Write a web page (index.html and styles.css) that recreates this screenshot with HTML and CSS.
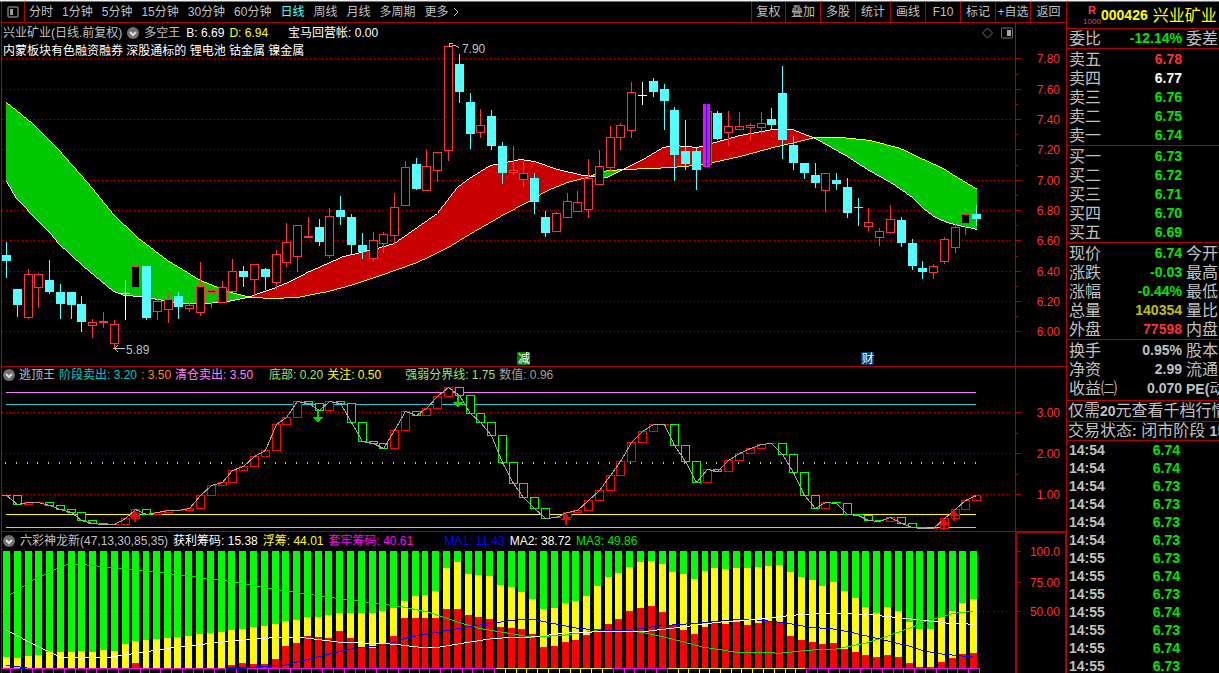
FILE: index.html
```html
<!DOCTYPE html>
<html lang="zh-CN">
<head>
<meta charset="utf-8">
<title>兴业矿业 000426</title>
<link rel="stylesheet" href="styles.css">
</head>
<body>
<div class="app">
  <main class="charts">
    <nav class="toolbar">
      <button class="tool layout" aria-label="布局"><svg width="12" height="12" viewBox="0 0 12 12"><rect x="1" y="1" width="10" height="10" rx="1" fill="none" stroke="#777" stroke-width="1.5"/><rect x="3" y="3" width="3" height="6" fill="#999"/></svg></button>
      <div class="periods">
        <button class="tool">分时</button><button class="tool">1分钟</button><button class="tool">5分钟</button><button class="tool">15分钟</button><button class="tool">30分钟</button><button class="tool">60分钟</button><button class="tool active">日线</button><button class="tool">周线</button><button class="tool">月线</button><button class="tool">多周期</button><button class="tool more">更多<svg width="6" height="10" viewBox="0 0 6 10"><path d="M1 1L5 5L1 9" fill="none" stroke="#c0c0c0"/></svg></button>
      </div>
      <div class="actions">
        <button class="tool">复权</button><button class="tool">叠加</button><button class="tool">多股</button><button class="tool">统计</button><button class="tool">画线</button><button class="tool">F10</button><button class="tool">标记</button><button class="tool">+自选</button><button class="tool">返回</button>
      </div>
    </nav>
    <section class="pane pane-main">
      <div class="plot">
        <div class="overlay">
          <div class="legend">
            <span>兴业矿业(日线.前复权)</span>
            <svg class="chevron" viewBox="0 0 12 12"><circle cx="6" cy="6" r="6"/><path d="M3 5L6 8L9 5"/></svg>
            <span>多空王</span><span class="white gap-s">B: 6.69</span><span class="yellow">D: 6.94</span><span class="white gap-l">宝马回营帐: 0.00</span>
            <svg class="view-icons" width="32" height="12" viewBox="0 0 32 12"><path d="M6.500 1L11.500 6L6.500 11L1.500 6Z" fill="none" stroke="#707070"/><rect x="20.500" y="1" width="11" height="10" rx="1" fill="none" stroke="#707070"/><rect x="26" y="3" width="4" height="6" fill="#a8a8a8"/></svg>
          </div>
          <div class="tags white">内蒙板块有色融资融券 深股通标的 锂电池 钴金属 镍金属</div>
        </div>
        <svg id="candles" class="draw" viewBox="0 23 1013 343" preserveAspectRatio="xMinYMin meet"></svg>
      </div>
      <svg id="axis1" class="axis" viewBox="0 23 51 343" preserveAspectRatio="xMinYMin meet"></svg>
    </section>
    <section class="pane pane-escape">
      <div class="plot">
        <div class="legend">
          <svg class="chevron" viewBox="0 0 12 12"><circle cx="6" cy="6" r="6"/><path d="M3 5L6 8L9 5"/></svg>
          <span>逃顶王</span><span class="teal">阶段卖出: 3.20</span><span class="orange">: 3.50</span><span class="pink">清仓卖出: 3.50</span><span class="lime gap-m">底部: 0.20</span><span class="yellow">关注: 0.50</span><span class="lime gap-w">强弱分界线: 1.75</span><span class="dim">数值: 0.96</span>
        </div>
        <svg id="escape" class="draw" viewBox="0 384 1013 147" preserveAspectRatio="xMinYMin meet"></svg>
      </div>
      <svg id="axis2" class="axis" viewBox="0 367 51 164" preserveAspectRatio="xMinYMin meet"></svg>
    </section>
    <section class="pane pane-chips">
      <div class="plot">
        <div class="legend">
          <svg class="chevron" viewBox="0 0 12 12"><circle cx="6" cy="6" r="6"/><path d="M3 5L6 8L9 5"/></svg>
          <span>六彩神龙新(47,13,30,85,35)</span><span class="white">获利筹码: 15.38</span><span class="yellow">浮筹: 44.01</span><span class="magenta">套牢筹码: 40.61</span><span class="blue gap-xl">MA1: 11.43</span><span class="white">MA2: 38.72</span><span class="green">MA3: 49.86</span>
        </div>
        <svg id="chips" class="draw" viewBox="0 549 1013 124" preserveAspectRatio="xMinYMin meet"></svg>
      </div>
      <svg id="axis3" class="axis" viewBox="0 532 51 141" preserveAspectRatio="xMinYMin meet"></svg>
    </section>
  </main>
  <aside class="quote">
    <header class="stock"><span class="badge"><b>R</b><small>1000</small></span><b class="code">000426</b><span class="name">兴业矿业</span></header>
    <table class="block ratio"><tbody><tr><th>委比</th><td class="green">-12.14%</td><td>委差</td></tr></tbody></table>
    <table class="block"><tbody>
      <tr><th>卖五</th><td class="red">6.78</td><td></td></tr>
      <tr><th>卖四</th><td class="white">6.77</td><td></td></tr>
      <tr><th>卖三</th><td class="green">6.76</td><td></td></tr>
      <tr><th>卖二</th><td class="green">6.75</td><td></td></tr>
      <tr><th>卖一</th><td class="green">6.74</td><td></td></tr>
    </tbody></table>
    <table class="block"><tbody>
      <tr><th>买一</th><td class="green">6.73</td><td></td></tr>
      <tr><th>买二</th><td class="green">6.72</td><td></td></tr>
      <tr><th>买三</th><td class="green">6.71</td><td></td></tr>
      <tr><th>买四</th><td class="green">6.70</td><td></td></tr>
      <tr><th>买五</th><td class="green">6.69</td><td></td></tr>
    </tbody></table>
    <table class="block"><tbody>
      <tr><th>现价</th><td class="green">6.74</td><td>今开</td></tr>
      <tr><th>涨跌</th><td class="green">-0.03</td><td>最高</td></tr>
      <tr><th>涨幅</th><td class="green">-0.44%</td><td>最低</td></tr>
      <tr><th>总量</th><td class="gold">140354</td><td>量比</td></tr>
      <tr><th>外盘</th><td class="red">77598</td><td>内盘</td></tr>
    </tbody></table>
    <table class="block funds"><tbody>
      <tr><th>换手</th><td>0.95%</td><td>股本</td></tr>
      <tr><th>净资</th><td>2.99</td><td>流通</td></tr>
      <tr><th>收益㈡</th><td>0.070</td><td><b>PE(</b>动)</td></tr>
    </tbody></table>
    <p class="notice">仅需<b>20</b>元查看千档行情</p>
    <p class="notice status">交易状态<b>:</b> 闭市阶段 <b>15:00</b></p>
    <table class="ticks"><tbody>
      <tr><th>14:54</th><td>6.74</td></tr>
      <tr><th>14:54</th><td>6.74</td></tr>
      <tr><th>14:54</th><td>6.73</td></tr>
      <tr><th>14:54</th><td>6.73</td></tr>
      <tr><th>14:54</th><td>6.73</td></tr>
      <tr><th>14:54</th><td>6.73</td></tr>
      <tr><th>14:55</th><td>6.73</td></tr>
      <tr><th>14:55</th><td>6.74</td></tr>
      <tr><th>14:55</th><td>6.73</td></tr>
      <tr><th>14:55</th><td>6.74</td></tr>
      <tr><th>14:55</th><td>6.73</td></tr>
      <tr><th>14:55</th><td>6.74</td></tr>
      <tr><th>14:55</th><td>6.73</td></tr>
    </tbody></table>
  </aside>
</div>
<script src="charts.js"></script>
</body>
</html>
```
FILE: styles.css
```css
* { box-sizing: border-box; }
body {
  margin: 0;
  background: #000;
  color: #c0c0c0;
  font: 12px/18px "Liberation Sans", "Noto Sans CJK SC", sans-serif;
  overflow: hidden;
}
.app {
  display: grid;
  grid-template-columns: minmax(0, 1fr) 153px;
  height: 100vh;
  border-top: 1px solid #f0f0f0;
  box-shadow: inset 0 1px #6f7a74;
  padding-top: 1px;
}
.charts {
  display: flex;
  flex-direction: column;
  min-width: 0;
  min-height: 0;
  border-left: 1px solid #b00000;
  margin-left: 1px;
}
.toolbar {
  display: flex;
  flex: 0 0 21px;
  border-bottom: 1px solid #b00000;
}
.tool {
  background: none;
  border: 0;
  padding: 0;
  color: #c0c0c0;
  font: inherit;
  line-height: 20px;
  white-space: nowrap;
}
.tool.active { color: #54ffff; }
.layout {
  width: 23px;
  border-right: 1px solid #b00000;
  display: flex;
  align-items: center;
  justify-content: center;
}
.periods { display: flex; gap: 9px; padding-left: 4px; }
.more { display: flex; align-items: center; gap: 4px; }
.actions {
  display: grid;
  grid-template-columns: 34px repeat(7, 35px) 36px;
  margin-left: auto;
}
.actions .tool { border-left: 1px solid #b00000; }

.pane { display: flex; min-height: 0; }
.pane-main { flex: 344 344 0; border-bottom: 1px solid #b00000; }
.pane-escape { flex: 165 165 0; border-bottom: 1px solid #b00000; }
.pane-chips { flex: 141 141 0; }
.plot {
  position: relative;
  display: flex;
  flex-direction: column;
  flex: 1;
  min-width: 0;
}
.draw { display: block; flex: 1; width: 100%; min-height: 0; }
.axis { flex: 0 0 51px; height: 100%; }
.overlay { position: absolute; inset: 0 0 auto; }
.legend {
  display: flex;
  align-items: center;
  gap: 5px;
  height: 17px;
  padding-left: 1px;
  white-space: nowrap;
}
.pane-escape .legend { gap: 4px; }
.overlay .legend { height: 19px; }
.tags { padding-left: 1px; }
.chevron { width: 12px; height: 12px; }
.chevron circle { fill: #707070; }
.chevron path { fill: none; stroke: #ddd; stroke-width: 2; }
.view-icons { margin-left: auto; margin-right: 2px; }
.gap-s { margin-left: 1px; }
.gap-m { margin-left: 12px; }
.gap-l { margin-left: 15px; }
.gap-w { margin-left: 20px; }
.gap-xl { margin-left: 26px; }

.white { color: #fff; }
.yellow { color: #ff0; }
.teal { color: #00c8c8; }
.orange { color: #ff8c1a; }
.pink { color: #ff80ff; }
.lime { color: #a0e070; }
.dim { color: #a0a0a0; }
.magenta { color: #f0f; }
.blue { color: #00f; }
.green { color: #00e600; }
.red { color: #ff3232; }
.gold { color: #c0c000; }

.quote {
  border-left: 1px solid #b00000;
  overflow: hidden;
  font-size: 16px;
  line-height: 19px;
  white-space: nowrap;
}
.quote b { font-size: 14px; }
.stock {
  display: flex;
  align-items: center;
  height: 27px;
  padding-left: 16px;
  border-bottom: 1px solid #b00000;
  color: #ff0;
}
.badge {
  display: flex;
  flex-direction: column;
  align-items: center;
  width: 18px;
  color: #ff3c3c;
}
.quote .badge b { font-size: 11px; line-height: 13px; }
.badge small { font: 8px/10px "Liberation Sans", sans-serif; }
.name { padding-left: 5px; }
.block {
  display: block;
  width: 100%;
  padding-top: 1px;
  border-bottom: 1px solid #b00000;
  border-spacing: 0;
  overflow: hidden;
}
.ratio { padding-top: 0; }
.funds { padding-bottom: 2px; }
.quote th, .quote td { height: 19px; padding: 0; line-height: 19px; }
.block tr { display: grid; grid-template-columns: 50px 65px 37px; }
.quote .block th { padding-left: 2px; font-weight: 400; text-align: left; }
.block td:nth-child(2) { font-size: 14px; font-weight: 700; text-align: right; }
.quote .block td:nth-child(3) { padding-left: 4px; }
.notice {
  height: 21px;
  margin: 0;
  padding-left: 1px;
  border-bottom: 1px solid #b00000;
  line-height: 19px;
}
.status { height: 19px; line-height: 17px; }
.ticks { border-spacing: 0; font-size: 14px; font-weight: 700; }
.quote .ticks th, .quote .ticks td { height: 18px; line-height: 18px; }
.quote .ticks th { width: 50px; padding-left: 2px; text-align: left; }
.ticks td { width: 63px; text-align: right; color: #00e600; }

svg text { font: 12px "Liberation Sans", "Noto Sans CJK SC", sans-serif; }
.crisp { shape-rendering: crispEdges; }
```
FILE: charts.js
```js
const OFFSET = 2; // the plots start two pixels in from the window edge
const cx = i => Math.round(6 + i * 10.78);
const rect = (x, y, w, h, fill) => `<rect x="${x}" y="${y}" width="${w}" height="${h}" fill="${fill}"/>`;
const box = (x, y, w, h, color, fill) => `<rect x="${x + 0.5}" y="${y + 0.5}" width="${w - 1}" height="${h - 1}" fill="${fill}" stroke="${color}"/>`;
const line = (pts, color) => `<polyline fill="none" stroke="${color}" points="${pts.map(p => `${p[0] + 0.5},${p[1] + 0.5}`).join(' ')}"/>`;
const dots = y => `<path d="M2 ${y + 0.5}H1014" stroke="#c00000" stroke-dasharray="1 3"/>`;
const pairs = s => s.split(' ').map(p => p.split(',').map(Number));
const put = (id, body) => { document.getElementById(id).innerHTML = `<g class="crisp" transform="translate(${-OFFSET} 0)">${body}</g>`; };

/* Candles: kind (c falling, r rising, w unchanged), high, body top, body bottom, low */
const candles = `c242,255,261,277 c289,289,305,316 r269,274,317,318 r273,274,287,307 c260,280,292,293 c284,292,304,318 c292,292,305,318 c296,304,322,331 r319,322,325,337 r312,321,322,327
r320,324,343,347 w280,293,294,319 r249,266,287,287 c266,266,318,319 r299,301,311,319 r294,299,309,322 c292,296,307,318 r299,305,308,311 r262,286,312,315 r288,290,292,307
r281,287,302,302 r259,271,291,291 c266,271,277,286 r264,264,279,296 c268,269,277,289 r250,254,282,289 r223,242,262,266 r225,225,256,271 r217,236,237,237 c219,227,242,245
r208,216,255,257 c196,210,217,224 c214,217,245,253 c233,245,252,258 r232,240,258,260 r232,234,243,252 r193,207,235,244 r161,167,205,205 c158,164,189,189 r149,166,190,190
r152,152,170,181 r46,46,150,160 c54,64,92,102 c93,102,134,148 r109,125,132,137 c110,116,146,149 c142,146,173,183 r146,170,172,174 r161,173,179,186 c173,178,202,213
c211,217,233,236 r212,213,231,231 r193,201,217,217 r191,202,211,211 r159,178,209,217 r150,166,184,184 r126,137,167,170 r123,125,137,149 r82,92,130,137 w82,95,96,104
c78,81,92,96 c84,89,101,129 c107,110,155,180 c120,151,164,169 c148,151,170,189 r111,111,164,164 c111,113,139,139 r111,126,132,145 r112,126,129,129 r123,125,127,140
r112,123,127,133 c108,119,125,129 c66,93,140,158 c136,145,163,169 c163,163,173,178 c163,175,183,187 r173,173,190,211 c173,180,184,189 c178,187,213,217 c198,207,208,225
r208,222,226,230 r228,231,237,245 r205,219,232,233 c217,220,243,246 c239,243,266,269 c261,268,272,278 r264,266,272,278 r237,239,261,263 r221,227,247,252 r214,214,223,234
c205,214,219,225`.split(/\s+/);

const slow = pairs('6,102 32,123 57,148 87,182 113,214 137,237 167,260 200,280 227,291 250,297 273,298 297,297 328,291 350,285 383,274 417,262 448,247 469,234 502,215 534,198 545,191 567,182 587,177 600,171 623,169 653,168 685,166 713,162 740,156 773,147 803,140 815,137 840,137 870,140 900,148 923,159 943,168 957,177 977,189');
const fast = pairs('6,181 16,198 37,220 50,233 58,243 83,266 113,291 124,295 140,296 157,299 180,303 207,303 227,301 247,297 273,288 290,281 307,272 323,265 343,256 357,253 377,248 394,243 417,227 437,213 457,187 469,178 490,165 520,159 534,161 557,169 583,175 607,177 623,169 643,159 663,147 673,145 697,147 711,143 740,135 773,129 792,129 815,138 847,156 867,169 892,183 912,197 923,208 935,217 947,222 963,226 977,229');
const at = (pts, x) => {
  const k = Math.max(1, pts.findIndex(p => p[0] >= x));
  const [a, b] = [pts[k - 1], pts[k]];
  return a[1] + (b[1] - a[1]) * (x - a[0]) / (b[0] - a[0]);
};

let out = [58, 89, 119, 149, 180, 210, 240, 271, 301, 331].map(dots).join('');
let up = '', down = '';
for (let x = 6; x < 977; x++) {
  const s = at(slow, x), f = at(fast, x);
  const seg = `M${x + 0.5} ${s + 0.5}V${f + 0.5}`;
  if (f > s) down += seg; else up += seg;
}
out += `<path d="${down}" stroke="#00c800"/><path d="${up}" stroke="#c80000"/>`;
out += line(slow, '#ff0') + line(fast, '#fff');
candles.forEach((s, i) => {
  const [hi, top, bot, low] = s.slice(1).split(',').map(Number);
  const x = cx(i);
  const color = { c: '#54ffff', r: '#ff3232', w: '#fff' }[s[0]];
  out += rect(x, hi, 1, low - hi + 1, color);
  if (s[0] === 'r') out += bot - top > 1 ? box(x - 4, top, 9, bot - top + 1, color, '#000') : rect(x - 4, top, 9, 2, color);
  else out += rect(x - 4, top, 9, bot - top, color);
});
out += rect(703, 104, 7, 63, '#f0f') + rect(706, 104, 1, 62, '#00f');
out += `<path d="M113 348.500H125M118 345.500L114 348.500L118 351.500M449 43.500H453M450 43V47M449 46.500H452M452 45.500L455 45.500L459 47.500" fill="none" stroke="#c0c0c0"/>`;
out += rect(517, 352, 13, 13, '#008000') + rect(861, 352, 13, 13, '#003c78');
out += '<text x="462" y="53" fill="#c0c0c0">7.90</text><text x="126" y="354" fill="#c0c0c0">5.89</text><text x="518" y="363" fill="#fff">减</text><text x="862" y="363" fill="#fff">财</text>';
put('candles', out);

/* Escape indicator: one level per day, a box spans the change from the day before */
const level = [495,504,502,502,505,509,512,520,523,524,524,518,509,514,512,510,510,508,495,485,482,470,466,456,450,424,417,401,403,410,401,403,422,441,443,448,430,411,415,408,396,387,395,413,422,435,462,483,497,508,518,517,512,510,500,490,475,461,442,431,424,424,445,461,482,469,471,460,453,448,444,443,454,472,495,508,502,503,514,515,520,521,517,523,527,528,528,518,509,500,495];
out = [412, 453, 494].map(dots).join('');
[[392, '#ff80ff'], [404, '#20c8d8'], [514, '#ff0'], [527, '#a0e070']].forEach(([y, c]) => { out += rect(6, y, 970, 1, c); });
level.forEach((y, i) => {
  const x = cx(i);
  out += rect(x - 1, 462, 1, 2, '#a0e070');
  const prev = i ? level[i - 1] : y;
  const color = i === 0 || y > prev ? '#0f0' : '#f00';
  const top = Math.min(y, prev), h = Math.abs(y - prev);
  out += h > 1 ? box(x - 4, top, 9, h + 1, color, '#000') : rect(x - 4, top, 9, 1, color);
});
out += line(level.map((y, i) => [cx(i), y]), '#a8a8a8');
[[318, 410], [458, 395]].forEach(([x, y]) => { out += `<path d="M${x - 1} ${y}h2v7h4l-5 6l-5 -6h4z" fill="#00d800"/>`; });
[[135, 510], [566, 513], [944, 518], [954, 509]].forEach(([x, y]) => { out += `<path d="M${x} ${y}l5 7h-4v5h-2v-5h-4z" fill="#f00"/>`; });
put('escape', out);

/* Chip distribution: heights in thirds of a pixel below the pane top */
const mid = [381,384,378,375,366,366,366,363,366,360,363,342,333,330,327,324,321,318,312,309,306,300,297,291,288,282,273,270,262,262,255,249,249,249,249,243,234,213,198,195,183,114,96,132,135,138,165,171,186,207,237,234,219,213,198,168,141,129,111,96,93,102,126,132,147,123,114,117,114,114,111,108,105,126,141,150,168,156,183,204,231,249,231,243,276,297,297,262,243,219,207];
const low = [414,414,414,414,414,414,414,414,414,414,414,414,400,414,414,414,414,414,414,414,414,405,399,402,402,387,348,339,318,321,324,303,324,350,354,342,318,264,264,264,264,237,237,255,261,267,291,294,297,312,351,348,336,330,315,297,282,267,243,234,228,246,285,300,312,291,273,282,276,285,279,273,276,318,330,336,342,339,357,366,375,381,375,381,399,411,411,396,384,372,369];
const py = v => Math.round(530 + v / 3);
out = dots(611);
mid.forEach((m, i) => {
  const x = cx(i) - 3, a = py(m), b = py(low[i]);
  out += rect(x, 551, 7, a - 551, '#0f0') + rect(x, a, 7, b - a, '#ff0') + rect(x, b, 7, 668 - b, '#f00');
});
const base = [[2, 20, '#f0f'], [20, 25, '#00f'], [25, 227, '#f0f'], [227, 248, '#00f'], [248, 498, '#f0f'], [498, 614, '#ff0'], [614, 670, '#f0f'], [670, 808, '#ff0'], [808, 983, '#f0f']];
base.forEach(([a, b, c]) => { out += rect(a, 668, b - a, 1, c); });
for (let i = 0; i < 91; i++) {
  const x = Math.round(10 + i * 10.8);
  out += rect(x, 669, 1, 4, (x > 498 && x < 614) || (x > 670 && x < 808) ? '#ff0' : '#f0f');
}
out += line(pairs('10,594 32,580 63,565 70,564 82,564 110,567 160,572 230,581 270,588 330,597 400,606 430,612 463,623 480,628 497,631 534,637 564,635 601,630 631,630 653,634 675,639 705,647 738,652 783,653 812,650 838,649 868,643 890,636 912,628 931,620 957,613 976,611'), '#00e600');
out += line(pairs('6,665 20,667 27,668 225,668 255,667 285,665 305,660 330,654 355,648 385,645 410,637 450,630 480,625 508,621 523,619 534,619 549,622 579,628 601,630 634,630 657,626 712,622 742,619 764,620 790,623 812,627 838,629 853,632 883,639 912,646 927,651 946,654 976,657'), '#00f');
out += line(pairs('6,630 35,645 60,657 82,658 110,657 170,648 230,641 280,637 300,637 340,642 395,644 420,647 440,647 470,642 497,638 531,637 557,634 579,632 649,631 683,627 720,622 749,620 805,614 838,613 868,614 897,617 934,621 951,623 976,624'), '#fff');
base.filter(b => b[2] === '#f0f' && b[0] < 248).forEach(([a, b, c]) => { out += rect(a, 668, b - a, 1, c); });
put('chips', out);

/* Price axes */
const axis = (id, top, height, ticks, minor, extra) => {
  let s = rect(0, top, 1, height, '#b00000');
  ticks.forEach(([y, t]) => { s += rect(1, y, 5, 1, '#b00000') + `<text x="45" y="${y + 5}" text-anchor="end" fill="#ff3232">${t}</text>`; });
  minor.forEach(y => { s += rect(1, y, 2, 1, '#b00000'); });
  document.getElementById(id).innerHTML = `<g class="crisp">${s + (extra || '')}</g>`;
};
axis('axis1', 23, 343, [[58, '7.80'], [89, '7.60'], [119, '7.40'], [149, '7.20'], [180, '7.00'], [210, '6.80'], [240, '6.60'], [271, '6.40'], [301, '6.20'], [331, '6.00']], [74, 104, 134, 165, 195, 225, 256, 286, 316]);
axis('axis2', 367, 164, [[412, '3.00'], [453, '2.00'], [494, '1.00']], [433, 474]);
axis('axis3', 532, 141, [[551, '100.0'], [582, '75.00'], [611, '50.00']], [], rect(0, 532, 2, 141, '#b00000') + rect(0, 532, 51, 1, '#b00000') + rect(50, 532, 1, 141, '#b00000'));
```
